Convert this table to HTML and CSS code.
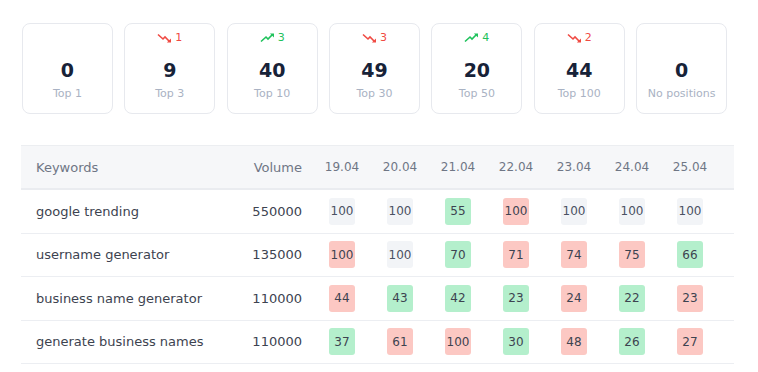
FILE: index.html
```html
<!DOCTYPE html>
<html>
<head>
<meta charset="utf-8">
<link rel="stylesheet" href="styles.css">
</head>
<body>
<div class="page">
  <div class="cards">
    <div class="card">
      <div class="trend"></div>
      <div class="num">0</div>
      <div class="label">Top 1</div>
    </div>
    <div class="card">
      <div class="trend down">
        <svg width="15" height="10" viewBox="0 0 15 10"><polyline points="1,1.5 6,6 8,4 12.5,8.5" fill="none" stroke="currentColor" stroke-width="1.6"/><polygon points="14,9.6 14,5.5 9.9,9.6" fill="currentColor"/></svg>
        <span>1</span>
      </div>
      <div class="num">9</div>
      <div class="label">Top 3</div>
    </div>
    <div class="card">
      <div class="trend up">
        <svg width="15" height="10" viewBox="0 0 15 10"><polyline points="1,8.5 6,4 8,6 12.5,1.5" fill="none" stroke="currentColor" stroke-width="1.6"/><polygon points="14,0.4 14,4.5 9.9,0.4" fill="currentColor"/></svg>
        <span>3</span>
      </div>
      <div class="num">40</div>
      <div class="label">Top 10</div>
    </div>
    <div class="card">
      <div class="trend down">
        <svg width="15" height="10" viewBox="0 0 15 10"><polyline points="1,1.5 6,6 8,4 12.5,8.5" fill="none" stroke="currentColor" stroke-width="1.6"/><polygon points="14,9.6 14,5.5 9.9,9.6" fill="currentColor"/></svg>
        <span>3</span>
      </div>
      <div class="num">49</div>
      <div class="label">Top 30</div>
    </div>
    <div class="card">
      <div class="trend up">
        <svg width="15" height="10" viewBox="0 0 15 10"><polyline points="1,8.5 6,4 8,6 12.5,1.5" fill="none" stroke="currentColor" stroke-width="1.6"/><polygon points="14,0.4 14,4.5 9.9,0.4" fill="currentColor"/></svg>
        <span>4</span>
      </div>
      <div class="num">20</div>
      <div class="label">Top 50</div>
    </div>
    <div class="card">
      <div class="trend down">
        <svg width="15" height="10" viewBox="0 0 15 10"><polyline points="1,1.5 6,6 8,4 12.5,8.5" fill="none" stroke="currentColor" stroke-width="1.6"/><polygon points="14,9.6 14,5.5 9.9,9.6" fill="currentColor"/></svg>
        <span>2</span>
      </div>
      <div class="num">44</div>
      <div class="label">Top 100</div>
    </div>
    <div class="card">
      <div class="trend"></div>
      <div class="num">0</div>
      <div class="label">No positions</div>
    </div>
  </div>

  <div class="table">
    <div class="row head">
      <div class="kw">Keywords</div>
      <div class="vol">Volume</div>
      <div class="d">19.04</div>
      <div class="d">20.04</div>
      <div class="d">21.04</div>
      <div class="d">22.04</div>
      <div class="d">23.04</div>
      <div class="d">24.04</div>
      <div class="d">25.04</div>
    </div>
    <div class="row">
      <div class="kw">google trending</div>
      <div class="vol">550000</div>
      <div class="d"><span class="b n">100</span></div>
      <div class="d"><span class="b n">100</span></div>
      <div class="d"><span class="b g">55</span></div>
      <div class="d"><span class="b r">100</span></div>
      <div class="d"><span class="b n">100</span></div>
      <div class="d"><span class="b n">100</span></div>
      <div class="d"><span class="b n">100</span></div>
    </div>
    <div class="row">
      <div class="kw">username generator</div>
      <div class="vol">135000</div>
      <div class="d"><span class="b r">100</span></div>
      <div class="d"><span class="b n">100</span></div>
      <div class="d"><span class="b g">70</span></div>
      <div class="d"><span class="b r">71</span></div>
      <div class="d"><span class="b r">74</span></div>
      <div class="d"><span class="b r">75</span></div>
      <div class="d"><span class="b g">66</span></div>
    </div>
    <div class="row">
      <div class="kw">business name generator</div>
      <div class="vol">110000</div>
      <div class="d"><span class="b r">44</span></div>
      <div class="d"><span class="b g">43</span></div>
      <div class="d"><span class="b g">42</span></div>
      <div class="d"><span class="b g">23</span></div>
      <div class="d"><span class="b r">24</span></div>
      <div class="d"><span class="b g">22</span></div>
      <div class="d"><span class="b r">23</span></div>
    </div>
    <div class="row">
      <div class="kw">generate business names</div>
      <div class="vol">110000</div>
      <div class="d"><span class="b g">37</span></div>
      <div class="d"><span class="b r">61</span></div>
      <div class="d"><span class="b r">100</span></div>
      <div class="d"><span class="b g">30</span></div>
      <div class="d"><span class="b r">48</span></div>
      <div class="d"><span class="b g">26</span></div>
      <div class="d"><span class="b r">27</span></div>
    </div>
  </div>
</div>
</body>
</html>
```

FILE: styles.css
```css
* { box-sizing: border-box; }
html, body { margin: 0; padding: 0; background: #ffffff; }
body {
  font-family: "DejaVu Sans", "Open Sans", sans-serif;
  color: #3d4350;
  overflow: hidden;
  height: 372px;
}
.page { padding: 23px 0 0 21px; }

.cards {
  display: flex;
  gap: 11.5px;
  width: 706px;
  padding-left: 1px;
}
.card {
  flex: 1;
  height: 91px;
  border: 1px solid #e7e9ee;
  border-radius: 8px;
  display: flex;
  flex-direction: column;
  align-items: center;
  padding-top: 8px;
}
.trend {
  height: 12px;
  display: flex;
  align-items: center;
  gap: 3px;
  font-size: 11px;
  line-height: 12px;
}
.trend svg { display: block; }
.trend.down { color: #f04a43; }
.trend.up { color: #1fc25c; }
.num {
  margin-top: 15px;
  font-size: 19px;
  font-weight: 700;
  color: #172238;
  line-height: 22px;
}
.label {
  margin-top: 6px;
  font-size: 11px;
  color: #a9b2c3;
  line-height: 14px;
}

.table {
  margin-top: 31px;
  width: 713px;
}
.row {
  display: grid;
  grid-template-columns: 187px 90px repeat(7, 58px);
  padding: 0 15px;
  height: 43.5px;
  align-items: center;
  border-bottom: 1px solid #eceef2;
  font-size: 13px;
}
.row.head {
  height: 45px;
  background: #f6f7f9;
  border-top: 1px solid #eceef1;
  border-bottom: 2px solid #eaecf0;
  color: #6f7685;
}
.row.head .d { font-size: 12px; }
.kw { white-space: nowrap; }
.vol { text-align: right; padding-right: 11px; }
.d { display: flex; justify-content: center; }
.b {
  display: inline-flex;
  align-items: center;
  justify-content: center;
  width: 26px;
  height: 27px;
  border-radius: 3px;
  font-size: 12px;
  color: #3d4350;
}
.b.n { background: #f2f4f7; color: #4a5163; }
.b.r { background: #fcc8c3; }
.b.g { background: #b4efcc; }
```
